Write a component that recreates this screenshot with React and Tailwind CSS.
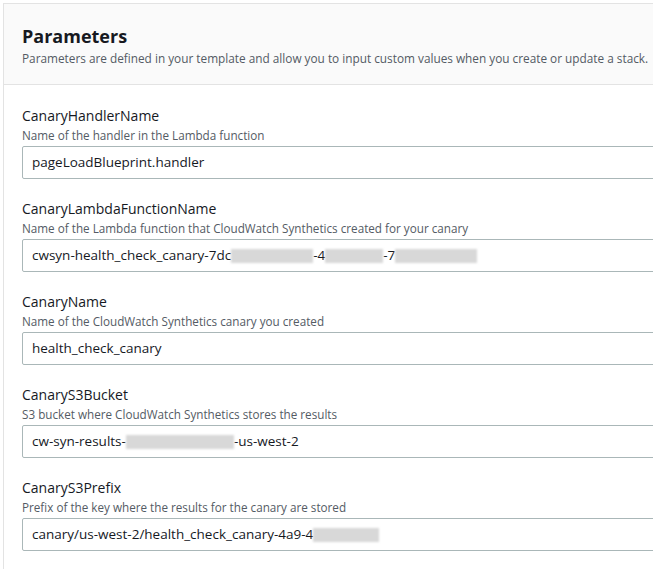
const B = ({ w }) => <span className="inline-block h-[14px] align-middle bg-[#d8d8d8] blur-[1px]" style={{ width: w }} />;

const fields = [
  { l: "CanaryHandlerName", d: "Name of the handler in the Lambda function", v: <>pageLoadBlueprint.handler</> },
  { l: "CanaryLambdaFunctionName", d: "Name of the Lambda function that CloudWatch Synthetics created for your canary", v: <>cwsyn-health_check_canary-7dc<B w={82} />-4<B w={58} />-7<B w={82} /></> },
  { l: "CanaryName", d: "Name of the CloudWatch Synthetics canary you created", v: <>health_check_canary</> },
  { l: "CanaryS3Bucket", d: "S3 bucket where CloudWatch Synthetics stores the results", v: <>cw-syn-results-<B w={108} />-us-west-2</> },
  { l: "CanaryS3Prefix", d: "Prefix of the key where the results for the canary are stored", v: <>canary/us-west-2/health_check_canary-4a9-4<B w={66} /></> },
];

export default function App() {
  return (
    <div className="w-[653px] h-[569px] overflow-hidden bg-white pl-[3px] pt-[3px]" style={{ fontFamily: '"Open Sans", sans-serif' }}>
      <div className="w-[700px] h-[600px] border border-[#e3e3e3] bg-white">
        <div className="bg-[#fafafa] border-b border-[#e3e3e3] h-[81px] pl-[18px] pt-[20px]">
          <div className="text-[18px] font-bold text-[#16191f] leading-[24px]">Parameters</div>
          <div className="text-[11.8px] text-[#545b64] leading-[16px] mt-[2px]">Parameters are defined in your template and allow you to input custom values when you create or update a stack.</div>
        </div>
        <div className="pl-[18px] pt-[21px]">
          {fields.map((f) => (
            <div key={f.l} className="h-[93px]">
              <div className="text-[14px] text-[#16191f] leading-[20px]">{f.l}</div>
              <div className="text-[11.7px] text-[#545b64] leading-[16px] mt-[1px]">{f.d}</div>
              <div className="mt-[3px] h-[33px] border border-[#aab7b8] rounded-[2px] flex items-center pl-[9px] text-[13.5px] text-[#16191f] whitespace-nowrap">{f.v}</div>
            </div>
          ))}
        </div>
      </div>
    </div>
  );
}
